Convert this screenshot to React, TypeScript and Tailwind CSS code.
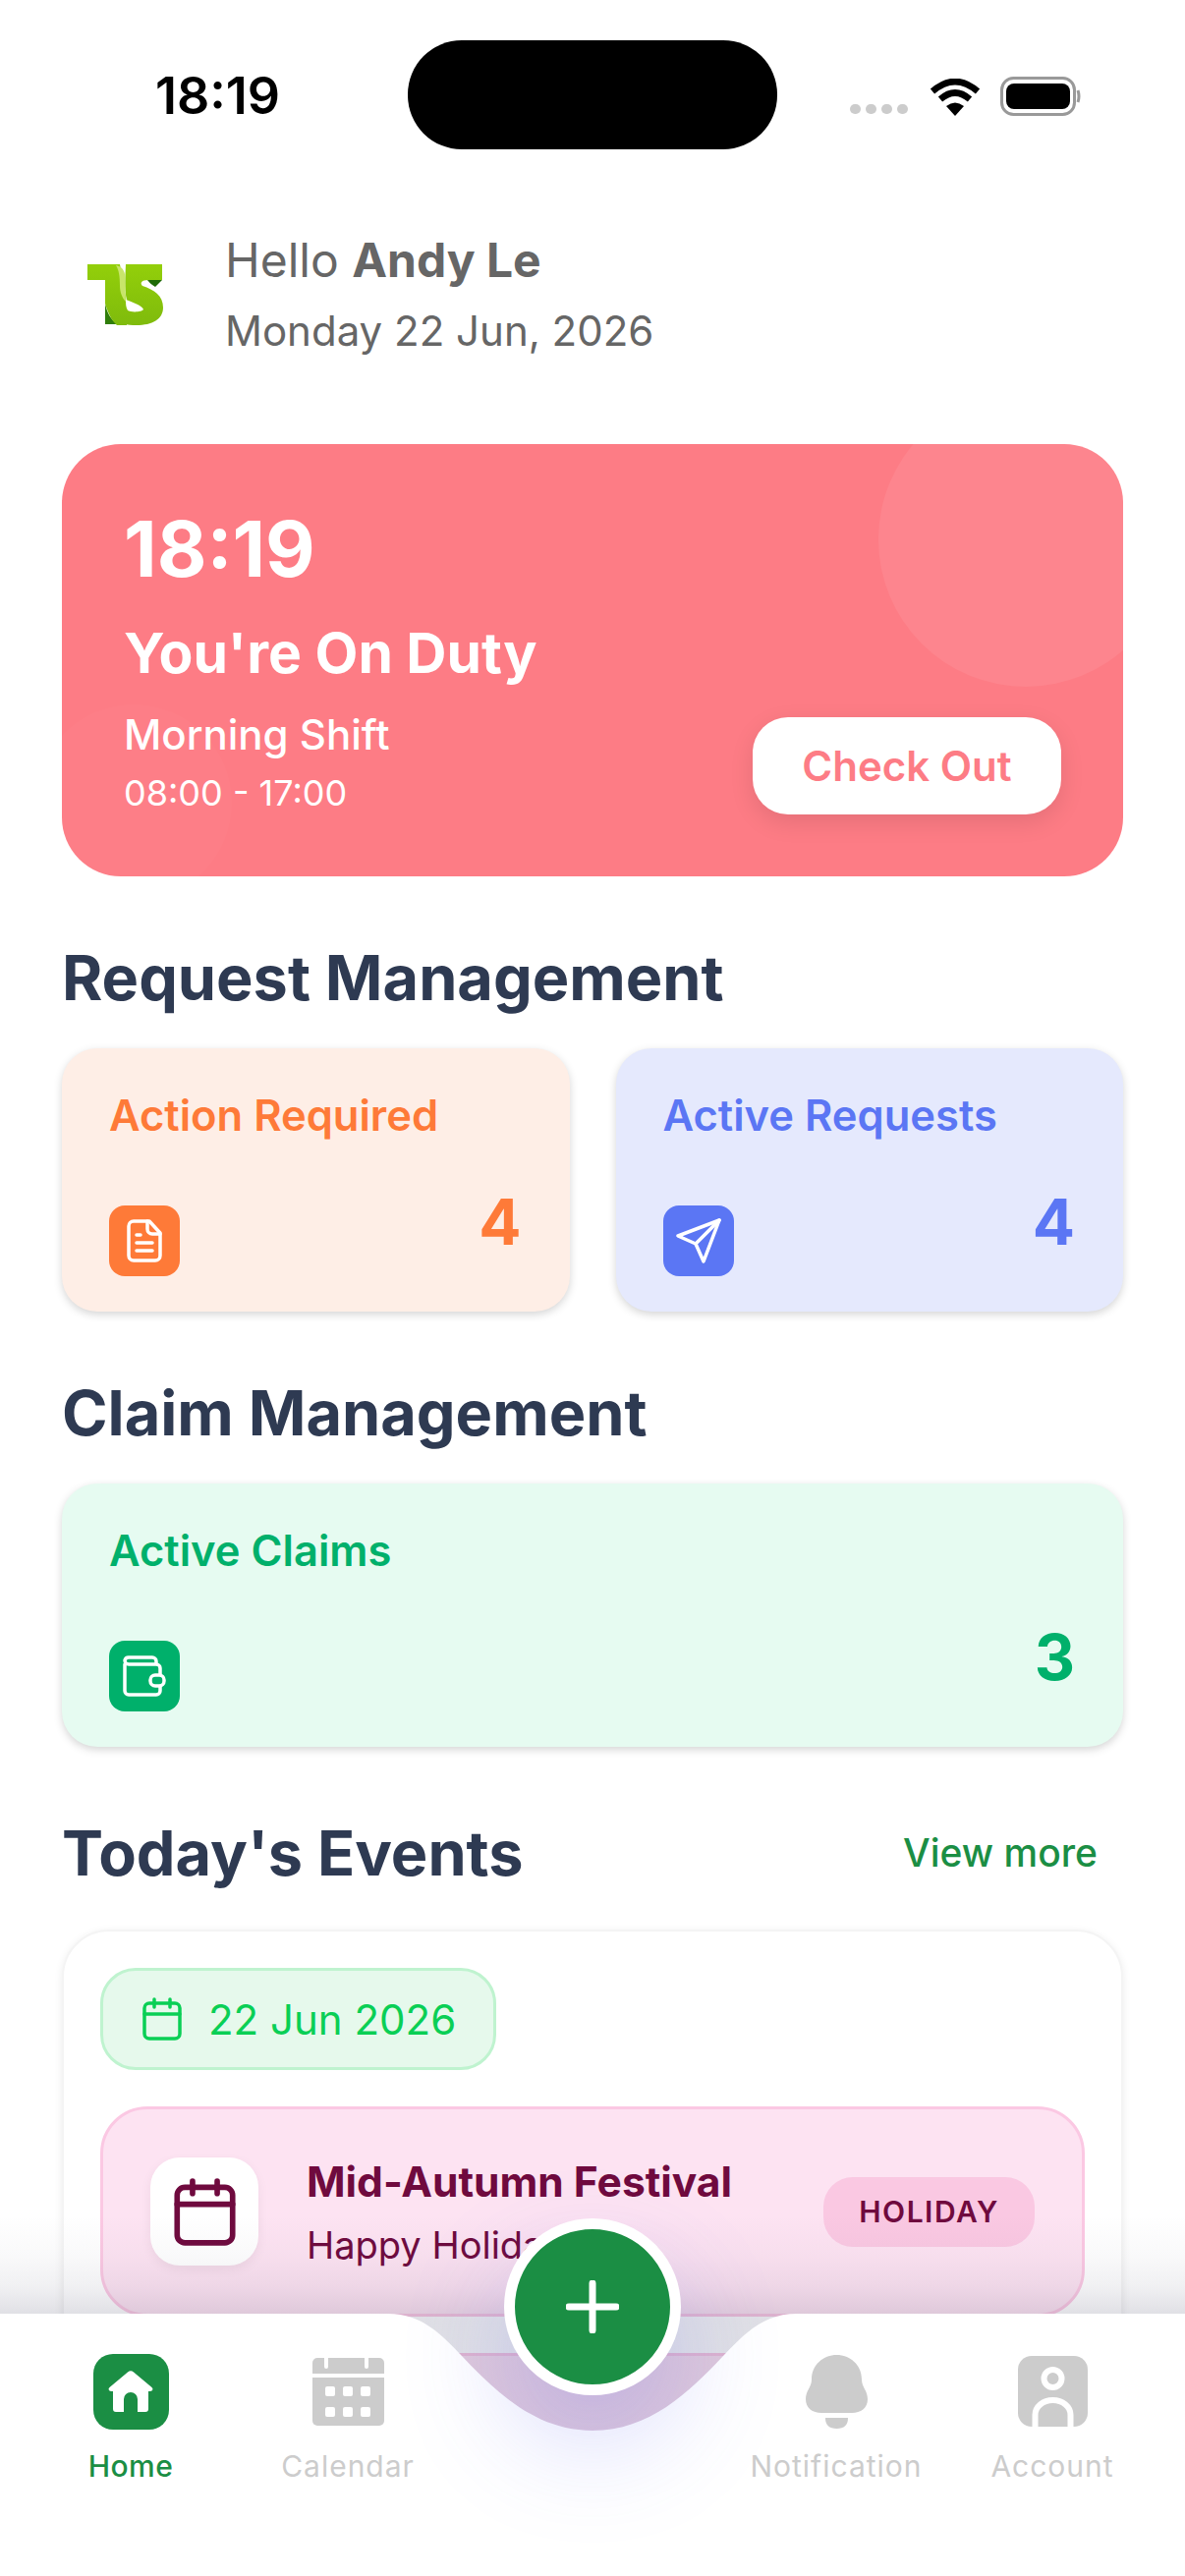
import React from 'react';

type CardProps = {
  title: string;
  count: number;
  bg: string;
  text: string;
  box: string;
  icon: React.ReactNode;
  className?: string;
};

function DocIcon() {
  return (
    <svg width="36" height="44" viewBox="0 0 36 44" fill="none" stroke="white" strokeWidth="3.5" strokeLinecap="round" strokeLinejoin="round">
      <path d="M7 2H23L34 14V37a5 5 0 0 1-5 5H7a5 5 0 0 1-5-5V7a5 5 0 0 1 5-5z" />
      <path d="M21 2V10a5 5 0 0 0 5 5H34" />
      <path d="M10 16h4M10 24h16M10 32h16" />
    </svg>
  );
}

function SendIcon() {
  return (
    <svg width="46" height="46" viewBox="0 0 46 46" fill="none" stroke="white" strokeWidth="3.5" strokeLinecap="round" strokeLinejoin="round">
      <path d="M44 2L2 18L20 26L28 44Z" />
      <path d="M20 26L44 2" />
    </svg>
  );
}

function WalletIcon() {
  return (
    <svg width="44" height="42" viewBox="0 0 44 42" fill="none" stroke="white" strokeWidth="3.5" strokeLinecap="round" strokeLinejoin="round">
      <path d="M2 9V36a4 4 0 0 0 4 4H34a4 4 0 0 0 4-4V13a4 4 0 0 0-4-4H6a4 4 0 0 1-4-4 4 4 0 0 1 4-3H30a4 4 0 0 1 4 4V9" />
      <rect x="28" y="20" width="14" height="11" rx="5" fill="#00B06B" />
    </svg>
  );
}

function CalendarLine({ color, size, height, sw }: { color: string; size: number; height: number; sw: number }) {
  return (
    <svg width={size} height={height} viewBox="0 0 40 44" fill="none" stroke={color} strokeWidth={sw} strokeLinecap="round" strokeLinejoin="round">
      <rect x="2" y="6" width="36" height="36" rx="5" />
      <path d="M2 17H38M12 2V10M28 2V10" />
    </svg>
  );
}

function TsLogo() {
  return (
    <svg width="80" height="64" viewBox="0 0 80 64">
      <defs>
        <linearGradient id="tsGreen" x1="0" y1="0" x2="0" y2="1">
          <stop offset="0" stopColor="#93CF0A" />
          <stop offset="1" stopColor="#7FBB0C" />
        </linearGradient>
      </defs>
      <path d="M18 40V61H30C24 56 20 50 18 40Z" fill="#2F7D0A" />
      <path d="M0 0H33L40 40V62H30C25 58 21 50 18 40V16H0Z" fill="url(#tsGreen)" />
      <path d="M39 0H76V16H62C55 16 53 19 56 22C68 26 77 32 77 44C77 56 66 62 50 62C40 62 32 60 28 56L40 36C38 28 38 20 39 0Z" fill="url(#tsGreen)" />
      <path d="M29 1C34 2 37 5 38 10L39 38C35 34 33 28 33 22C33 12 32 6 29 1Z" fill="#C8E56A" />
      <path d="M61 16H76L69 23C66 21 63 19 61 16Z" fill="#1F6B07" />
      <path d="M39 36C44 38 56 42 57 46C55 49 44 49 41 47C39 44 39 40 39 36Z" fill="white" />
    </svg>
  );
}

function SummaryCard({ title, count, bg, text, box, icon, className }: CardProps) {
  return (
    <div className={`h-[268px] rounded-[36px] pt-[40px] pl-[48px] pr-[49px] pb-[36px] flex flex-col justify-between shadow-[0_3px_8px_rgba(0,0,0,0.17)] ${bg} ${className ?? ''}`}>
      <div className={`text-[43.5px] leading-[56px] font-semibold ${text}`}>{title}</div>
      <div className="flex items-end justify-between">
        <div className={`w-[72px] h-[72px] rounded-[16px] flex items-center justify-center ${box}`}>{icon}</div>
        <div className={`text-[64px] leading-[72px] font-bold mb-[19px] ${text}`}>{count}</div>
      </div>
    </div>
  );
}

function NavItem({ label, active, icon }: { label: string; active?: boolean; icon: React.ReactNode }) {
  return (
    <div className="w-[220px] flex flex-col items-center">
      <div className="h-[84px] flex items-center justify-center">{icon}</div>
      <div className={`mt-[15px] text-[30px] leading-[38px] ${active ? 'text-[#1B8E44] font-medium tracking-[0.5px]' : 'text-[#CCCCCC] tracking-[1px]'}`}>{label}</div>
    </div>
  );
}

export default function App() {
  return (
    <div className="relative w-[1206px] h-[2622px] overflow-hidden bg-white font-[Inter,sans-serif]">
      {/* status bar */}
      <div className="relative h-[237px] pt-[41px]">
        <div className="mx-auto w-[376px] h-[111px] rounded-[55px] bg-black" />
        <div className="absolute left-[158px] top-[69px] text-[52px] leading-[58px] font-semibold text-black">18:19</div>
        <div className="absolute left-[865px] top-[78px] flex items-end gap-[22px] h-[40px]">
          <div className="flex gap-[5px] mb-[2px]">
            <div className="w-[11px] h-[10px] rounded-full bg-[#CCCCCC]" />
            <div className="w-[11px] h-[10px] rounded-full bg-[#CCCCCC]" />
            <div className="w-[11px] h-[10px] rounded-full bg-[#CCCCCC]" />
            <div className="w-[11px] h-[10px] rounded-full bg-[#CCCCCC]" />
          </div>
          <svg width="52" height="38" viewBox="0 0 52 38" fill="none">
            <path d="M3 13Q26 -7 49 13" stroke="black" strokeWidth="6.5" />
            <path d="M11 21Q26 8 41 21" stroke="black" strokeWidth="6.5" />
            <path d="M17 28Q26 21 35 28L26 38Z" fill="black" />
          </svg>
          <svg width="82" height="40" viewBox="0 0 82 40" fill="none" className="-ml-[2px]">
            <rect x="1.5" y="1.5" width="74" height="37" rx="12" stroke="#999999" strokeWidth="3" />
            <rect x="6" y="7" width="65" height="26" rx="8" fill="black" />
            <path d="M79 14Q81 20 79 26" stroke="#999999" strokeWidth="3" />
          </svg>
        </div>
      </div>

      {/* greeting */}
      <div className="h-[215px] flex items-start pl-[89px]">
        <div className="mt-[32px]">
          <TsLogo />
        </div>
        <div className="ml-[60px] text-[#666666]">
          <div className="text-[48px] leading-[56px]">
            Hello <span className="font-bold">Andy Le</span>
          </div>
          <div className="mt-[16px] text-[42px] leading-[56px]">Monday 22 Jun, 2026</div>
        </div>
      </div>

      <div className="px-[63px]">
        {/* shift card */}
        <div className="relative h-[440px] overflow-hidden rounded-[60px] bg-[#FD7C85] pt-[60px] px-[63px] pb-[63px] flex items-end justify-between">
          <div className="absolute left-[831px] -top-[53px] w-[300px] h-[300px] rounded-full bg-white/[0.07]" />
          <div className="absolute -left-[27px] top-[265px] w-[200px] h-[200px] rounded-full bg-white/[0.02]" />
          <div className="relative text-white">
            <div className="text-[78px] leading-[92px] font-bold">18:19</div>
            <div className="mt-[24px] text-[57px] leading-[72px] font-bold">You're On Duty</div>
            <div className="mt-[22px] text-[42px] leading-[50px] font-medium">Morning Shift</div>
            <div className="mt-[12px] text-[36px] leading-[44px]">08:00 - 17:00</div>
          </div>
          <div className="relative w-[314px] h-[99px] rounded-[36px] bg-white flex items-center justify-center text-[42px] font-semibold text-[#FD7C85] shadow-[0_8px_24px_rgba(0,0,0,0.1)]">
            Check Out
          </div>
        </div>

        <h2 className="mt-[67px] text-[63px] leading-[72px] font-bold text-[#2E3A52]">Request Management</h2>
        <div className="mt-[36px] grid grid-cols-2 gap-[47px]">
          <SummaryCard title="Action Required" count={4} bg="bg-[#FEEEE6]" text="text-[#FE7A38]" box="bg-[#FE7A38]" icon={<DocIcon />} />
          <SummaryCard title="Active Requests" count={4} bg="bg-[#E5E9FD]" text="text-[#5B76F4]" box="bg-[#5B76F4]" icon={<SendIcon />} />
        </div>

        <h2 className="mt-[67px] text-[63px] leading-[72px] font-bold text-[#2E3A52]">Claim Management</h2>
        <div className="mt-[36px]">
          <SummaryCard title="Active Claims" count={3} bg="bg-[#E6FBF1]" text="text-[#00B06B]" box="bg-[#00B06B]" icon={<WalletIcon />} />
        </div>

        <div className="mt-[72px] flex items-center justify-between pr-[26px]">
          <h2 className="text-[63px] leading-[72px] font-bold text-[#2E3A52]">Today's Events</h2>
          <div className="text-[39px] font-medium text-[#1B8E44]">View more</div>
        </div>

        {/* events */}
        <div className="mt-[42px] h-[700px] rounded-[48px] bg-white border-[2px] border-[#F4F4F4] p-[37px] shadow-[0_2px_8px_rgba(0,0,0,0.08)]">
          <div className="w-[403px] h-[104px] rounded-[36px] border-[3px] border-[#BFF3CF] bg-[#E6F9EC] flex items-center gap-[27px] pl-[40px]">
            <CalendarLine color="#0ACF55" size={40} height={44} sw={3.5} />
            <span className="text-[42px] text-[#0ACF55]">22 Jun 2026</span>
          </div>
          <div className="mt-[37px] h-[214px] rounded-[48px] border-[3px] border-[#FBC8E3] bg-[#FDE3F2] pl-[48px] pr-[48px] flex items-center">
            <div className="w-[110px] h-[110px] rounded-[30px] bg-white flex items-center justify-center shadow-[0_4px_12px_rgba(0,0,0,0.06)]">
              <CalendarLine color="#6F0A3E" size={63} height={69} sw={3.6} />
            </div>
            <div className="ml-[49px] flex-1">
              <div className="text-[42.5px] leading-[56px] font-bold text-[#6F0A3E]">Mid-Autumn Festival</div>
              <div className="mt-[11px] text-[38px] leading-[50px] text-[#6F0A3E]">Happy Holiday</div>
            </div>
            <div className="w-[215px] h-[71px] rounded-[30px] bg-[#FAC8E2] flex items-center justify-center text-[30px] font-semibold tracking-[1.5px] text-[#6F0A3E]">
              HOLIDAY
            </div>
          </div>
          <div className="mt-[37px] h-[214px] rounded-[48px] border-[3px] border-[#FBC8E3] bg-[#FDE3F2]" />
        </div>
      </div>

      {/* fade above the tab bar */}
      <div className="absolute left-0 right-0 top-[2255px] h-[240px] bg-[linear-gradient(to_bottom,rgba(70,70,100,0)_0%,rgba(70,70,100,0.03)_17%,rgba(70,70,100,0.08)_30%,rgba(70,70,100,0.17)_42%,rgba(70,70,110,0.17)_100%)]" />

      {/* tab bar */}
      <nav className="absolute left-0 right-0 top-[2355px] h-[267px]">
        <svg className="absolute inset-0" width="1206" height="267" viewBox="0 0 1206 267">
          <path d="M0 0H395C430 0 450 22 470 43C505 80 545 119 603 119C661 119 701 80 736 43C756 22 776 0 811 0H1206V267H0Z" fill="white" />
        </svg>
        <div className="relative flex pl-[23px] pt-[37px]">
          <NavItem
            label="Home"
            active
            icon={
              <div className="w-[77px] h-[77px] rounded-[20px] bg-[#1B8E44] flex items-center justify-center">
                <svg width="46" height="42" viewBox="0 0 46 42" fill="white">
                  <path d="M20 1.5Q23 -1 26 1.5L44.5 17Q47 20 43 21H41V39Q41 42 38 42H30V29a7 7 0 0 0-14 0V42H8Q5 42 5 39V21H3Q-1 20 1.5 17Z" />
                </svg>
              </div>
            }
          />
          <div className="w-[220px] ml-[1px] -mr-[1px]">
            <NavItem
              label="Calendar"
              icon={
                <svg width="73" height="69" viewBox="0 0 73 69">
                  <path d="M5 0H12V9a2 2 0 0 0 4 0V0H53V9a2 2 0 0 0 4 0V0H68a5 5 0 0 1 5 5V16H0V5a5 5 0 0 1 5-5Z" fill="#CCCCCC" />
                  <path d="M0 20H73V64a5 5 0 0 1-5 5H5a5 5 0 0 1-5-5Z" fill="#CCCCCC" />
                  <g fill="white">
                    <rect x="13" y="29" width="10" height="10" rx="2" />
                    <rect x="31" y="29" width="10" height="10" rx="2" />
                    <rect x="49" y="29" width="10" height="10" rx="2" />
                    <rect x="13" y="50" width="10" height="10" rx="2" />
                    <rect x="31" y="50" width="10" height="10" rx="2" />
                    <rect x="49" y="50" width="10" height="10" rx="2" />
                  </g>
                </svg>
              }
            />
          </div>
          <div className="w-[278px]" />
          <NavItem
            label="Notification"
            icon={
              <svg width="63" height="75" viewBox="0 0 63 75" fill="#CCCCCC">
                <path d="M31.5 0C45 0 57 10 57 25C57 33 63 36 63 45C63 54 56 59 47 59H16C7 59 0 54 0 45C0 36 6 33 6 25C6 10 18 0 31.5 0Z" />
                <path d="M20 64H43Q43 75 31.5 75Q20 75 20 64Z" />
              </svg>
            }
          />
          <NavItem
            label="Account"
            icon={
              <svg width="71" height="72" viewBox="0 0 71 72" fill="none">
                <rect width="71" height="72" rx="14" fill="#CCCCCC" />
                <circle cx="35.5" cy="23" r="9" stroke="white" strokeWidth="6" />
                <path d="M17.5 72V60a18 15 0 0 1 36 0V72" stroke="white" strokeWidth="6" />
              </svg>
            }
          />
        </div>
      </nav>

      {/* add button */}
      <div className="absolute left-[513px] top-[2258px] w-[180px] h-[180px] rounded-full bg-[#1B8E44] border-[11px] border-white flex items-center justify-center shadow-[0_50px_110px_rgba(80,90,240,0.22)]">
        <svg width="54" height="54" viewBox="0 0 54 54" fill="none" stroke="white" strokeWidth="7" strokeLinecap="round">
          <path d="M27 3V51M3 27H51" />
        </svg>
      </div>
    </div>
  );
}
